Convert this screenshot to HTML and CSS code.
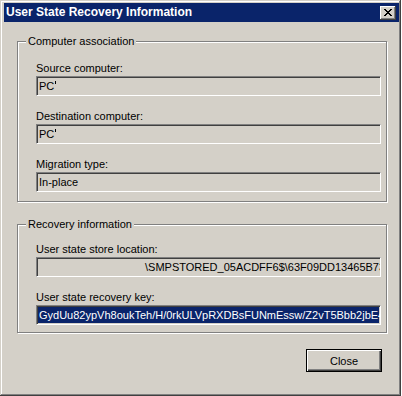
FILE: index.html
```html
<!DOCTYPE html>
<html lang="en">
<head>
    <meta charset="UTF-8">
    <title>User State Recovery Information</title>
    <link rel="stylesheet" href="styles.css">
</head>
<body>
    <div class="window">
        <div class="titlebar">
            <span class="title">User State Recovery Information</span>
            <button class="close-x" aria-label="Close">
                <svg width="8" height="7" viewBox="0 0 8 7" shape-rendering="crispEdges">
                    <path d="M0 0h2v1h-2z M6 0h2v1h-2z M1 1h2v1h-2z M5 1h2v1h-2z M2 2h4v1h-4z M3 3h2v1h-2z M2 4h4v1h-4z M1 5h2v1h-2z M5 5h2v1h-2z M0 6h2v1h-2z M6 6h2v1h-2z" fill="#000"/>
                </svg>
            </button>
        </div>

        <div class="dialog-body">
            <fieldset class="group group-computer">
                <legend>Computer association</legend>

                <div class="field-label">Source computer:</div>
                <div class="textbox">PC<span class="redact-mark"></span></div>

                <div class="field-label">Destination computer:</div>
                <div class="textbox">PC<span class="redact-mark"></span></div>

                <div class="field-label">Migration type:</div>
                <div class="textbox">In-place</div>
            </fieldset>

            <fieldset class="group group-recovery">
                <legend>Recovery information</legend>

                <div class="field-label">User state store location:</div>
                <div class="textbox store-path">\SMPSTORED_05ACDFF6$\63F09DD13465B73C</div>

                <div class="field-label">User state recovery key:</div>
                <div class="textbox selected">GydUu82ypVh8oukTeh/H/0rkULVpRXDBsFUNmEssw/Z2vT5Bbb2jbE4</div>
            </fieldset>

            <div class="buttons">
                <button class="btn default">Close</button>
            </div>
        </div>
    </div>
</body>
</html>
```

FILE: styles.css
```css
/* Classic dialog look */
body {
    margin: 0;
    background-color: #ffffff;
    font-family: "Liberation Sans", Arial, sans-serif;
    font-size: 11px;
    color: #000000;
}

.window {
    width: 401px;
    height: 396px;
    box-sizing: border-box;
    background-color: #d4d0c8;
    padding: 3px 2px 2px 4px;
    display: flex;
    flex-direction: column;
    box-shadow: inset -1px -1px 0 #404040, inset 1px 1px 0 #d4d0c8,
                inset -2px -2px 0 #808080, inset 2px 2px 0 #ffffff;
}

/* Title bar */
.titlebar {
    height: 19px;
    background-color: #0a246a;
    display: flex;
    align-items: center;
    justify-content: space-between;
    padding: 0 3px 0 2px;
}

.title {
    color: #ffffff;
    font-weight: bold;
    font-size: 12px;
    line-height: 19px;
    white-space: nowrap;
}

.close-x {
    width: 16px;
    height: 14px;
    padding: 0;
    margin: 0;
    border: none;
    background-color: #d4d0c8;
    display: flex;
    align-items: center;
    justify-content: center;
    box-shadow: inset -1px -1px 0 #404040, inset 1px 1px 0 #ffffff,
                inset -2px -2px 0 #808080;
}

/* Content */
.dialog-body {
    flex: 1;
    display: flex;
    flex-direction: column;
    padding-top: 13px;
}

.group {
    margin: 0 12px 0 13px;
    padding: 14px 5px 9px 18px;
    border: 1px solid #808080;
    box-shadow: 1px 1px 0 #ffffff, inset 1px 1px 0 #ffffff;
    min-width: 0;
}

.group legend {
    margin-left: -10px;
    padding: 0 2px;
    line-height: 13px;
    background-color: #d4d0c8;
}

.group-recovery {
    margin-top: 16px;
    padding-top: 12px;
    padding-bottom: 7px;
}

.field-label {
    line-height: 13px;
    margin-bottom: 1px;
}

.textbox {
    height: 20px;
    box-sizing: border-box;
    padding: 0 2px;
    line-height: 18px;
    white-space: nowrap;
    overflow: hidden;
    border-top: 1px solid #808080;
    border-left: 1px solid #808080;
    border-right: 1px solid #ffffff;
    border-bottom: 1px solid #ffffff;
    box-shadow: inset 1px 1px 0 #404040, inset -1px -1px 0 #d4d0c8;
    margin-bottom: 14px;
}

.textbox:last-child {
    margin-bottom: 0;
}

.redact-mark {
    display: inline-block;
    width: 1px;
    height: 3px;
    background-color: #000000;
    margin-left: 1px;
    vertical-align: 6px;
}

.store-path {
    text-indent: 106px;
}

.textbox.selected {
    background-color: #0a246a;
    color: #ffffff;
}

/* Buttons */
.buttons {
    display: flex;
    justify-content: flex-end;
    margin-top: 16px;
    padding-right: 17px;
}

.btn {
    width: 76px;
    height: 23px;
    padding: 0;
    font-family: inherit;
    font-size: 11px;
    color: #000000;
    background-color: #d4d0c8;
    border: 1px solid #000000;
    box-shadow: inset 1px 1px 0 #ffffff, inset -1px -1px 0 #404040,
                inset -2px -2px 0 #808080;
}
```
